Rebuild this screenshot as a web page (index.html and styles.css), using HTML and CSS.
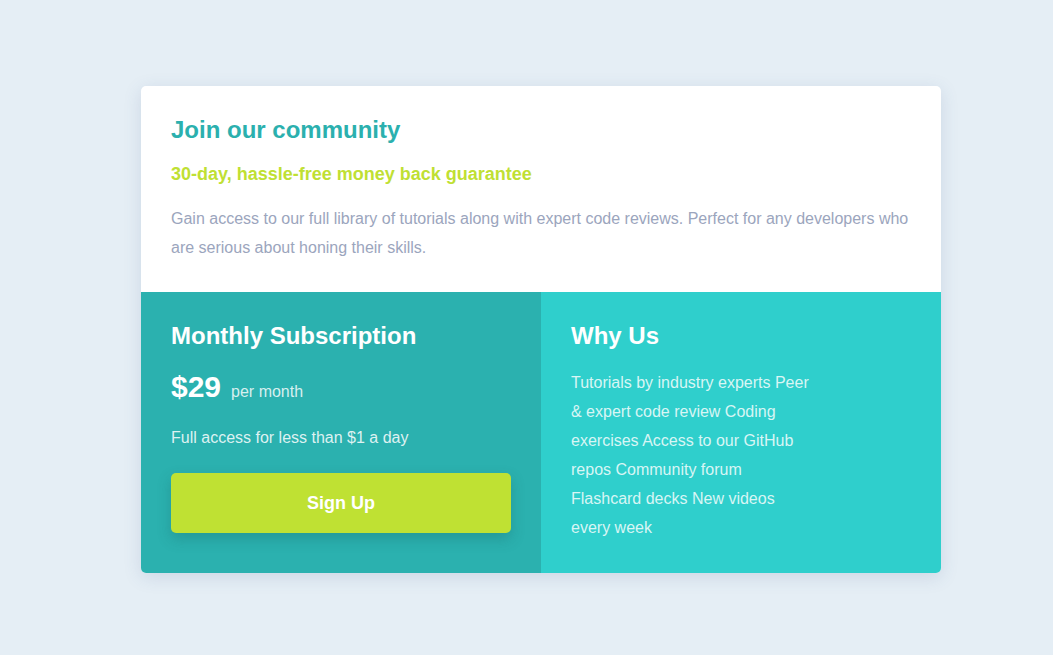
FILE: index.html
```html
<!DOCTYPE html>
<html lang="en">
<head>
<meta charset="utf-8">
<title>Single Price Grid</title>
<link rel="stylesheet" href="styles.css">
</head>
<body>
<main class="card">
  <section class="intro">
    <h1 class="intro-title">Join our community</h1>
    <h2 class="intro-sub">30-day, hassle-free money back guarantee</h2>
    <p class="intro-text">Gain access to our full library of tutorials along with expert code reviews. Perfect for any developers who are serious about honing their skills.</p>
  </section>
  <div class="bottom">
    <section class="sub">
      <h2 class="col-title">Monthly Subscription</h2>
      <div class="price"><span class="amount">$29</span><span class="per">per month</span></div>
      <p class="access">Full access for less than $1 a day</p>
      <button class="signup">Sign Up</button>
    </section>
    <section class="why">
      <h2 class="col-title">Why Us</h2>
      <p class="why-list">Tutorials by industry experts Peer &amp; expert code review Coding exercises Access to our GitHub repos Community forum Flashcard decks New videos every week</p>
    </section>
  </div>
</main>
</body>
</html>
```

FILE: styles.css
```css
* { box-sizing: border-box; }
html, body { margin: 0; padding: 0; }
body {
  background: #e5eef5;
  font-family: "Liberation Sans", Arial, sans-serif;
  min-height: 655px;
  padding: 86px 0 0 141px;
}
.card {
  width: 800px;
  background: #fff;
  border-radius: 5px;
  overflow: hidden;
  box-shadow: 0 4px 18px rgba(60, 90, 140, 0.15);
}
.intro {
  padding: 30px 30px 30px;
}
.intro-title {
  margin: 0 0 20px;
  font-size: 24px;
  font-weight: 700;
  line-height: 28px;
  color: #2bb0ae;
}
.intro-sub {
  margin: 0 0 19px;
  font-size: 18px;
  font-weight: 700;
  line-height: 21px;
  color: #bfe033;
}
.intro-text {
  margin: 0;
  font-size: 16px;
  line-height: 29px;
  color: #9ba5bd;
}
.bottom {
  display: flex;
}
.sub, .why {
  flex: 1 1 0;
  padding: 30px 30px 40px;
  color: #fff;
}
.sub { background: #2bb1af; }
.why { background: #2fcfcc; padding-bottom: 30px; }
.col-title {
  margin: 0 0 18px;
  font-size: 24px;
  font-weight: 700;
  line-height: 28px;
  color: #fff;
}
.price {
  display: flex;
  align-items: baseline;
  gap: 10px;
  line-height: 37px;
}
.amount {
  font-size: 30px;
  font-weight: 700;
}
.per {
  font-size: 16px;
  color: rgba(255, 255, 255, 0.82);
}
.access {
  margin: 18px 0 26px;
  font-size: 16px;
  line-height: 19px;
  color: rgba(255, 255, 255, 0.85);
}
.signup {
  display: block;
  width: 100%;
  height: 60px;
  border: 0;
  border-radius: 5px;
  background: #bfe133;
  color: #fff;
  font-family: inherit;
  font-size: 18px;
  font-weight: 700;
  box-shadow: 0 6px 14px rgba(20, 80, 80, 0.25);
  cursor: pointer;
}
.why-list {
  margin: 0;
  max-width: 240px;
  font-size: 16px;
  line-height: 29px;
  color: rgba(255, 255, 255, 0.82);
}
```
